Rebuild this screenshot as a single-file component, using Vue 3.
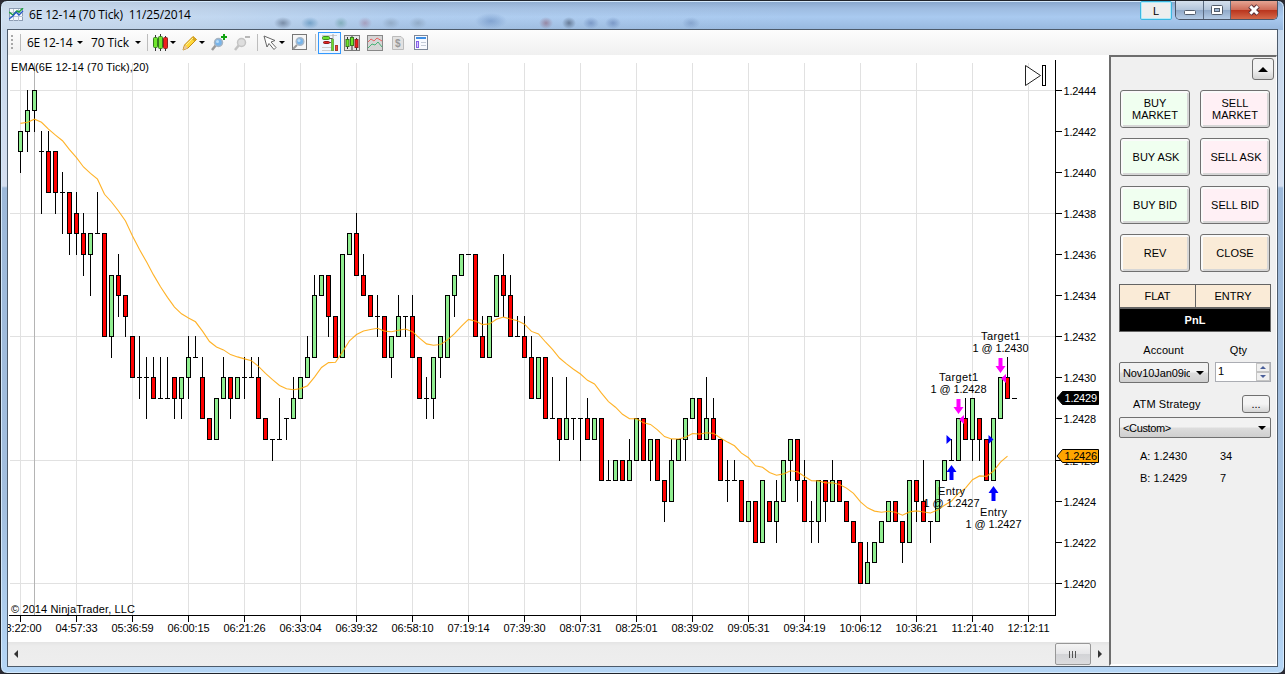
<template>
  <div class="desktop">
    <div class="window">
      <!-- title bar -->
      <header class="titlebar">
        <svg class="app-icon" width="15" height="14" viewBox="0 0 15 14">
          <rect x="0.5" y="0.5" width="13" height="12" fill="#f4f8fc" stroke="#8d9db3" />
          <path d="M4.5 1v12M9.5 1v12M1 4.5h13M1 8.5h13" stroke="#b9c4d4" />
          <path d="M0 4L4 7L8 3L10 4L14 0" fill="none" stroke="#1ea33c" stroke-width="1.5" />
          <path d="M0 11L4 8L7 4L10 7L14 3" fill="none" stroke="#2457c5" stroke-width="1.3" />
        </svg>
        <span class="title">6E 12-14 (70 Tick)&nbsp; 11/25/2014</span>
        <button class="link-btn">L</button>
        <div class="window-btns">
          <button class="win-btn minimize">
            <svg width="28" height="18" viewBox="0 0 28 18"><rect x="8.5" y="9.5" width="11" height="4" rx="1" fill="#fff" stroke="#535d6b" /></svg>
          </button>
          <button class="win-btn maximize">
            <svg width="26" height="18" viewBox="0 0 26 18">
              <rect x="7.5" y="4.500" width="11" height="9" rx="1" fill="#fff" stroke="#535d6b" />
              <rect x="10.500" y="7.500" width="5" height="3" fill="#9eb6d3" stroke="#535d6b" />
            </svg>
          </button>
          <button class="win-btn close">
            <svg width="46" height="18" viewBox="0 0 46 18">
              <path d="M19 5L27 13M27 5L19 13" stroke="#5a3038" stroke-width="5" />
              <path d="M19.300 5.300L26.700 12.700M26.700 5.300L19.300 12.700" stroke="#fff" stroke-width="3" />
            </svg>
          </button>
        </div>
      </header>

      <div class="client">
        <!-- toolbar -->
        <div class="toolbar">
          <svg class="grip" width="4" height="16" viewBox="0 0 4 16">
            <path d="M1 0v16" stroke="#a8a8a8" stroke-width="2" stroke-dasharray="2 2" />
          </svg>
          <span class="sep first"></span>
          <span class="tool-text instrument">6E 12-14</span><i class="caret"></i>
          <span class="tool-text period">70 Tick</span><i class="caret"></i>
          <span class="sep second"></span>
          <svg class="icon" width="16" height="18" viewBox="0 0 16 18">
            <path d="M2.500 1v16M7.500 0v17M12.500 2v15" stroke="#333" />
            <rect x="0.500" y="3.500" width="4" height="10" rx="1" fill="#6fe62c" stroke="#387b1e" />
            <rect x="5.500" y="2.500" width="4" height="12" rx="1" fill="#6fe62c" stroke="#387b1e" />
            <rect x="10.500" y="3.500" width="4" height="11" rx="1" fill="#f0201d" stroke="#8d2323" />
          </svg><i class="caret near"></i>
          <svg class="icon pencil" width="16" height="16" viewBox="0 0 16 16">
            <path d="M1 15L2.500 10L11 1.500L14.500 4.500L6 13Z" fill="#ffd83a" stroke="#c48a13" />
            <path d="M3 10L6 13L1 15Z" fill="#eac69a" />
            <path d="M11 1.500L14.500 4.500L12.500 6.500L9.500 3.500Z" fill="#d8a71e" />
            <path d="M4 10L11 3" stroke="#fff29a" />
          </svg><i class="caret near"></i>
          <svg class="icon" width="17" height="17" viewBox="0 0 17 17">
            <path d="M1 16L5 11" stroke="#9a9a9a" stroke-width="2.500" />
            <circle cx="7.500" cy="8.500" r="4" fill="#79b5ea" stroke="#a8b5c2" stroke-width="1.500" />
            <circle cx="6.500" cy="7.500" r="1.500" fill="#b9dcf8" />
            <path d="M13 0v6M10 3h6" stroke="#12a312" stroke-width="2" />
          </svg>
          <svg class="icon zoom-out" width="17" height="17" viewBox="0 0 17 17">
            <path d="M1 16L5 11" stroke="#c2c2c2" stroke-width="2.500" />
            <circle cx="7.500" cy="8.500" r="4" fill="#dedede" stroke="#c4c4c4" stroke-width="1.500" />
            <path d="M11 3h5" stroke="#b8b8b8" stroke-width="2" />
          </svg>
          <span class="sep third"></span>
          <svg class="icon" width="15" height="16" viewBox="0 0 15 16">
            <path d="M1 1L12 5.500L8 7L13 12.500L11 14.500L6 8.500L4 12Z" fill="#fff" stroke="#666" />
          </svg><i class="caret near"></i>
          <svg class="icon search" width="15" height="17" viewBox="0 0 15 17">
            <rect x="0.500" y="0.500" width="14" height="15" fill="#f6f6f6" stroke="#777" />
            <path d="M1 15L5 11" stroke="#999" stroke-width="2" />
            <circle cx="8" cy="7.500" r="3.800" fill="#79b5ea" stroke="#a9b8c8" stroke-width="1.500" />
            <circle cx="7" cy="6.500" r="1.500" fill="#b9dcf8" />
          </svg>
          <span class="sep last"></span>
          <span class="active-tool">
            <svg width="18" height="18" viewBox="0 0 18 18">
              <path d="M1 1.500h15M1 16.500h9M1 13.500h9" stroke="#ccc" />
              <path d="M8 8.500h4M8 4.500h4" stroke="#555" />
              <rect x="1.500" y="2.500" width="7" height="3" rx="1" fill="#68df2d" stroke="#3f8c20" />
              <rect x="2.500" y="7.500" width="6" height="2" rx="1" fill="#e32222" stroke="#8e1b1b" />
              <path d="M12 0v17" stroke="#aaa" />
              <rect x="10.500" y="5.500" width="2" height="11" fill="#68df2d" stroke="#6fae50" />
              <rect x="14.500" y="11.500" width="2" height="5" fill="#f24b3d" stroke="#a73a30" />
            </svg>
          </span>
          <svg class="icon" width="16" height="16" viewBox="0 0 16 16">
            <rect x="0.500" y="0.500" width="15" height="15" fill="#e6e6e6" stroke="#777" />
            <path d="M3.500 2v12M8 1v14M12.500 3v12" stroke="#333" />
            <rect x="2" y="4.500" width="3" height="7" fill="#6fe62c" stroke="#387b1e" />
            <rect x="6.500" y="2.500" width="3" height="8" fill="#6fe62c" stroke="#387b1e" />
            <rect x="11" y="4.500" width="3" height="8" fill="#f0201d" stroke="#8d2323" />
          </svg>
          <svg class="icon profit" width="16" height="16" viewBox="0 0 16 16">
            <rect x="0.500" y="0.500" width="15" height="15" fill="#d6d6d6" stroke="#888" />
            <path d="M1 7L4 4L7 6L10 3L15 6" fill="none" stroke="#e76565" />
            <path d="M1 13L5 9L8 10L11 7L15 12" fill="none" stroke="#48b375" />
          </svg>
          <svg class="icon money" width="12" height="14" viewBox="0 0 12 14">
            <path d="M0.500 0.500H9L11.500 3V13.500H0.500Z" fill="#e2e2e2" stroke="#bbb" />
            <text x="3" y="11" class="dollar">$</text>
          </svg>
          <svg class="icon layout" width="14" height="15" viewBox="0 0 14 15">
            <rect x="0.500" y="0.500" width="13" height="14" fill="#f8faff" stroke="#7d8798" />
            <path d="M2 3h10" stroke="#3c8ee5" stroke-width="2" />
            <rect x="2.500" y="6.500" width="2" height="6" fill="#dcc9ff" stroke="#8560e8" />
            <path d="M7 7.500h5M7 10.500h5" stroke="#c4cbd8" />
          </svg>
        </div>

        <div class="body">
          <!-- chart -->
          <main class="chart-pane">
            <svg class="chart" width="1101" height="587" viewBox="8 55 1101 587">
              <g shape-rendering="crispEdges">
                <rect v-for="p in gridPrices" :key="'h' + p" x="10" :y="py(p)" width="1045" height="1" fill="#e1e1e1" />
                <rect v-for="t in times" :key="'v' + t.x" :x="t.x" y="63" width="1" height="552" fill="#e1e1e1" />
                <rect x="34" y="63" width="1" height="552" fill="#b4b4b4" />
                <g v-for="c in candles" :key="c.x">
                  <rect :x="c.x" :y="c.high" width="1" :height="c.low - c.high + 1" fill="#000" />
                  <rect :x="c.x - 2" :y="c.top" width="5" :height="c.bottom - c.top + 1" fill="#000" />
                  <rect
                    v-if="c.bottom > c.top"
                    :x="c.x - 1"
                    :y="c.top + 1"
                    width="3"
                    :height="c.bottom - c.top - 1"
                    :fill="c.up ? '#90ee90' : '#ff0000'"
                  />
                </g>
              </g>
              <polyline :points="emaPoints" fill="none" stroke="#ffa500" stroke-width="1.100" stroke-opacity="0.85" />

              <!-- executions -->
              <g v-for="e in executions" :key="e.x + e.name">
                <path :d="e.arrow" :fill="e.color" />
                <path :d="e.mark" :fill="e.color" />
                <text :x="e.tx" :y="e.ty" text-anchor="middle" :textLength="e.w">{{ e.name }}</text>
                <text :x="e.tx" :y="e.ty + 12" text-anchor="middle" textLength="56">{{ e.price }}</text>
              </g>

              <!-- axes -->
              <g shape-rendering="crispEdges">
                <rect x="1055" y="60" width="1" height="556" />
                <rect x="9" y="615" width="1047" height="1" />
                <rect v-for="p in axisPrices" :key="'t' + p" x="1056" :y="py(p)" width="6" height="1" />
                <rect v-for="t in times" :key="'x' + t.x" :x="t.x" y="616" width="1" height="6" />
              </g>
              <text v-for="p in axisPrices" :key="'l' + p" x="1063.500" :y="py(p) + 5" textLength="32.500">1.24{{ p }}</text>
              <text v-for="t in times" :key="t.label" :x="t.x + 0.5" y="632" text-anchor="middle" textLength="42">{{ t.label }}</text>
              <path d="M1057 398L1062.500 391.500H1098.500V404.500H1062.500Z" fill="#000" stroke="#000" />
              <text x="1064.500" y="402" textLength="32.500" class="white">1.2429</text>
              <path d="M1057 456L1062.500 449.500H1098.500V462.500H1062.500Z" fill="#ffa500" stroke="#000" />
              <text x="1064.500" y="460" textLength="32.500">1.2426</text>

              <text x="11" y="71" textLength="138">EMA(6E 12-14 (70 Tick),20)</text>
              <text x="11" y="613" textLength="124">© 2014 NinjaTrader, LLC</text>
              <path d="M1025.500 65.500V85.500L1040.500 75.500Z" fill="#fff" stroke="#222" />
              <rect x="1042.500" y="65.500" width="3" height="20" fill="#fff" stroke="#000" />
            </svg>
            <div class="scrollbar">
              <i class="arrow left"></i>
              <span class="thumb"><i></i><i></i><i></i></span>
              <i class="arrow right"></i>
            </div>
          </main>

          <!-- chart trader -->
          <aside class="trader">
            <button class="collapse"><i class="up"></i></button>
            <div class="order-grid">
              <button v-for="b in orderButtons" :key="b.text" class="order-btn" :class="b.kind">
                <span>{{ b.text }}</span>
              </button>
            </div>
            <div class="position">
              <span>FLAT</span>
              <span>ENTRY</span>
            </div>
            <div class="pnl">PnL</div>
            <div class="labels"><span class="account-label">Account</span><span class="qty-label">Qty</span></div>
            <div class="row">
              <div class="select account"><span>Nov10Jan09ic</span><i class="down"></i></div>
              <div class="qty">
                <span>1</span>
                <div class="spinner"><b><i class="spin-up"></i></b><b><i class="spin-down"></i></b></div>
              </div>
            </div>
            <div class="row atm">
              <span class="atm-label">ATM Strategy</span>
              <button class="more">...</button>
            </div>
            <div class="select strategy"><span>&lt;Custom&gt;</span><i class="down"></i></div>
            <div class="quote ask"><span>A: 1.2430</span><span>34</span></div>
            <div class="quote"><span>B: 1.2429</span><span>7</span></div>
          </aside>
        </div>
      </div>
    </div>
  </div>
</template>

<script setup>
// open, high, low, close - in ticks above 1.2400
const bars = [
  [41, 42, 40, 42], [42, 44, 41, 43], [43, 44, 42, 44], [41, 42, 38, 41], [41, 42, 39, 39],
  [41, 41, 38, 39], [39, 40, 37, 39], [39, 39, 36, 37], [38, 39, 36, 37], [37, 38, 35, 36],
  [36, 37, 34, 37], [37, 39, 37, 37], [37, 37, 32, 32], [32, 35, 31, 35], [35, 36, 33, 34],
  [34, 34, 32, 33], [32, 32, 30, 30], [30, 32, 29, 30], [30, 31, 28, 30], [30, 31, 29, 29],
  [29, 31, 29, 29], [29, 31, 29, 29], [30, 30, 28, 29], [29, 30, 28, 30], [30, 32, 29, 31],
  [31, 32, 31, 31], [30, 31, 28, 28], [28, 28, 27, 27], [27, 29, 27, 29], [29, 31, 29, 30],
  [30, 30, 28, 29], [29, 30, 29, 30], [30, 31, 29, 30], [30, 31, 30, 30], [30, 31, 28, 28],
  [28, 28, 27, 27], [27, 27, 26, 27], [27, 29, 27, 27], [28, 28, 27, 28], [28, 30, 28, 29],
  [29, 30, 29, 30], [30, 32, 30, 31], [31, 35, 31, 34], [34, 35, 34, 35], [35, 35, 32, 33],
  [33, 33, 31, 31], [31, 36, 31, 36], [36, 37, 36, 37], [37, 38, 35, 35], [35, 36, 34, 34],
  [34, 34, 33, 33], [33, 34, 32, 33], [33, 33, 31, 31], [31, 32, 30, 32], [32, 34, 32, 33],
  [33, 33, 32, 33], [33, 34, 31, 31], [31, 31, 29, 29], [29, 30, 28, 29], [29, 31, 28, 31],
  [31, 32, 30, 32], [31, 34, 31, 34], [34, 35, 33, 35], [35, 36, 35, 36], [36, 36, 36, 36],
  [36, 36, 32, 32], [32, 33, 31, 31], [31, 33, 31, 33], [33, 35, 33, 35], [35, 36, 33, 34],
  [34, 35, 32, 32], [32, 33, 32, 32], [32, 33, 31, 31], [31, 32, 29, 29], [29, 31, 29, 31],
  [31, 31, 28, 28], [28, 30, 28, 28], [28, 28, 26, 27], [27, 30, 27, 28], [28, 28, 27, 28],
  [28, 28, 26, 28], [28, 29, 27, 27], [27, 28, 27, 28], [28, 28, 25, 25], [25, 26, 25, 25],
  [25, 26, 25, 26], [26, 26, 25, 25], [25, 27, 25, 26], [26, 28, 26, 28], [28, 28, 26, 26],
  [26, 27, 25, 27], [27, 27, 25, 25], [25, 25, 23, 24], [24, 27, 24, 26], [26, 27, 26, 27],
  [27, 28, 26, 28], [28, 29, 28, 29], [29, 29, 27, 27], [27, 30, 27, 28], [28, 29, 27, 27],
  [27, 27, 25, 25], [25, 26, 24, 25], [25, 26, 25, 25], [25, 25, 23, 23], [23, 24, 23, 24],
  [24, 24, 22, 22], [22, 25, 22, 25], [24, 24, 23, 23], [23, 25, 22, 24], [24, 26, 24, 26],
  [26, 27, 25, 27], [27, 27, 24, 25], [25, 26, 23, 23], [23, 24, 22, 23], [23, 25, 22, 25],
  [25, 25, 23, 24], [24, 26, 24, 25], [25, 25, 24, 24], [24, 24, 23, 23], [23, 23, 22, 22],
  [22, 22, 20, 20], [20, 22, 20, 21], [21, 22, 21, 22], [22, 23, 22, 23], [23, 24, 23, 24],
  [24, 24, 23, 23], [23, 23, 21, 22], [22, 25, 22, 25], [25, 25, 23, 24], [24, 26, 23, 23],
  [23, 23, 22, 23], [23, 25, 23, 25], [25, 26, 25, 26], [26, 27, 26, 26], [26, 28, 26, 28],
  [28, 29, 27, 27], [27, 29, 26, 29], [28, 28, 26, 27], [27, 27, 25, 25], [25, 28, 25, 28],
  [28, 30, 28, 30], [30, 31, 29, 29], [29, 29, 29, 29]
]

const scale = p => 90 + (44 - p) * 20.56
const py = p => Math.floor(scale(p))

const candles = bars.map(([open, high, low, close], i) => ({
  x: 20 + i * 7,
  high: py(high),
  low: py(low),
  top: py(Math.max(open, close)),
  bottom: py(Math.min(open, close)),
  up: close > open
}))

// 20 period EMA of the closes, the open bar is left out
let ema = 42.4
const emaPoints = bars.slice(0, -1).map((bar, i) => {
  if (i > 0) ema += (bar[3] - ema) * 2 / 21
  return `${20.5 + i * 7},${(scale(ema) + 0.5).toFixed(1)}`
}).join(' ')

const gridPrices = [44, 38, 32, 26, 20]
const axisPrices = [44, 42, 40, 38, 36, 34, 32, 30, 28, 26, 24, 22, 20]

const times = [
  '03:22:00', '04:57:33', '05:36:59', '06:00:15', '06:21:26', '06:33:04', '06:39:32',
  '06:58:10', '07:19:14', '07:39:30', '08:07:31', '08:25:01', '08:39:02', '09:05:31',
  '09:34:19', '10:06:12', '10:36:21', '11:21:40', '12:12:11'
].map((label, i) => ({ label, x: 20 + i * 56 }))

const downArrow = (x, y) => `M${x - 2} ${y}h4v8h3l-5 7l-5 -7h3z`
const upArrow = (x, y) => `M${x - 2} ${y}h4v-8h3l-5 -7l-5 7h3z`

const executions = [
  { name: 'Entry', price: '1 @ 1.2427', x: 951, tx: 951.5, ty: 495, w: 27, color: '#0000ff', arrow: upArrow(951.5, 480), mark: 'M946.500 435v9l5 -4.500z' },
  { name: 'Target1', price: '1 @ 1.2428', x: 958, tx: 958.5, ty: 381, w: 39, color: '#ff00ff', arrow: downArrow(958.5, 399), mark: 'M964 415v9l-5 -4.500z' },
  { name: 'Entry', price: '1 @ 1.2427', x: 993, tx: 993.5, ty: 516, w: 27, color: '#0000ff', arrow: upArrow(993.5, 501), mark: 'M988.500 435v9l5 -4.500z' },
  { name: 'Target1', price: '1 @ 1.2430', x: 1000, tx: 1000.5, ty: 340, w: 39, color: '#ff00ff', arrow: downArrow(1000.5, 358), mark: 'M1006 374v9l-5 -4.500z' }
]

const orderButtons = [
  { text: 'BUY MARKET', kind: 'buy' },
  { text: 'SELL MARKET', kind: 'sell' },
  { text: 'BUY ASK', kind: 'buy single' },
  { text: 'SELL ASK', kind: 'sell single' },
  { text: 'BUY BID', kind: 'buy' },
  { text: 'SELL BID', kind: 'sell' },
  { text: 'REV', kind: 'neutral' },
  { text: 'CLOSE', kind: 'neutral' }
]
</script>

<style>
body {
  margin: 0;
  overflow: hidden;
}
</style>

<style scoped>
* {
  box-sizing: border-box;
}

.desktop {
  width: 1285px;
  height: 674px;
  background: #2b2a33;
  font-family: "Liberation Sans", Arial, sans-serif;
  font-size: 11px;
  color: #000;
}

button {
  padding: 0;
  font: inherit;
  color: inherit;
}

/* glass frame, other windows shimmer through the title bar */
.window {
  width: 1285px;
  height: 674px;
  display: flex;
  flex-direction: column;
  border: 1px solid #20242b;
  border-radius: 7px;
  box-shadow: inset 0 0 0 1px #d5e9fb;
  background:
    radial-gradient(ellipse 9px 6px at 282px 22px, rgba(60, 75, 100, 0.5), transparent),
    radial-gradient(ellipse 9px 6px at 309px 22px, rgba(40, 110, 160, 0.45), transparent),
    radial-gradient(ellipse 7px 6px at 340px 22px, rgba(60, 130, 120, 0.4), transparent),
    radial-gradient(ellipse 7px 6px at 364px 22px, rgba(150, 80, 110, 0.35), transparent),
    radial-gradient(ellipse 9px 6px at 390px 22px, rgba(110, 130, 150, 0.4), transparent),
    radial-gradient(ellipse 9px 6px at 417px 22px, rgba(110, 130, 150, 0.4), transparent),
    radial-gradient(ellipse 16px 8px at 490px 20px, rgba(70, 110, 170, 0.4), transparent),
    radial-gradient(ellipse 7px 6px at 545px 22px, rgba(130, 60, 80, 0.45), transparent),
    radial-gradient(ellipse 7px 6px at 568px 22px, rgba(40, 50, 70, 0.5), transparent),
    radial-gradient(ellipse 8px 6px at 590px 22px, rgba(60, 90, 150, 0.4), transparent),
    radial-gradient(ellipse 8px 6px at 612px 22px, rgba(60, 90, 150, 0.4), transparent),
    radial-gradient(ellipse 9px 6px at 690px 22px, rgba(80, 110, 160, 0.35), transparent),
    linear-gradient(90deg, rgba(225, 233, 241, 0.7) 0, rgba(225, 233, 241, 0.45) 210px, rgba(225, 233, 241, 0.15) 400px, transparent 800px) 0 0 / 100% 29px no-repeat,
    linear-gradient(#86a5cb 0, #9dbbe0 7px, #a9caf0 16px, #97b7dd 29px) 0 0 / 100% 29px no-repeat,
    linear-gradient(#c5d8ec 0, #d5dff0 185px, #9db9da 187px, #a3bfdf 500px, #b5d6f6 100%);
}

.titlebar {
  height: 28px;
  flex: none;
  display: flex;
  align-items: flex-start;
  padding-left: 8px;
}

.app-icon {
  margin-top: 7px;
}

.title {
  flex: 1;
  margin: 5px 0 0 5px;
  font: 12px/17px "Open Sans", sans-serif;
  letter-spacing: -0.16px;
}

.link-btn {
  width: 32px;
  height: 19px;
  margin-right: 3px;
  border: 1px solid #3db7e0;
  border-radius: 2px;
  background: #eeeeee;
  box-shadow: inset 0 0 0 1px #b3ecfb;
}

.window-btns {
  display: flex;
  height: 19px;
  margin-right: 6px;
  border: 1px solid #4a5668;
  border-top: none;
  border-radius: 0 0 5px 5px;
  overflow: hidden;
}

.win-btn {
  height: 18px;
  border: 0;
  border-right: 1px solid #5a6a80;
  background: linear-gradient(#d5e0ed 0, #b3c5db 48%, #8fa8c7 50%, #b4cbe5 100%);
}

.win-btn svg {
  display: block;
}

.minimize {
  width: 28px;
}

.maximize {
  width: 27px;
}

.close {
  width: 46px;
  border-right: 0;
  background: linear-gradient(#e5a493 0, #cf6c58 48%, #b8331c 50%, #d5694a 100%);
}

.client {
  flex: 1;
  min-height: 0;
  margin: 0 6px 6px;
  display: flex;
  flex-direction: column;
  border: 1px solid #4d5b6b;
  background: #f0f0f0;
}

.toolbar {
  height: 25px;
  flex: none;
  display: flex;
  align-items: center;
  padding-left: 3px;
  background: linear-gradient(#fdfdfd, #f0f0f0);
}

.sep {
  width: 1px;
  height: 17px;
  background: #bdbdbd;
}

.sep.first {
  margin: 0 6px 0 5px;
}

.sep.second {
  margin: 0 5px 0 6px;
}

.sep.third {
  margin: 0 5px 0 6px;
}

.sep.last {
  margin: 0 2px 0 8px;
}

.tool-text {
  font: 12px/16px "Open Sans", sans-serif;
  letter-spacing: -0.35px;
  white-space: nowrap;
}

.instrument {
  width: 50px;
}

.period {
  width: 44px;
  margin-left: 8px;
  letter-spacing: -0.1px;
}

.caret {
  border: 3px solid transparent;
  border-top-color: #000;
  border-bottom: 0;
}

.caret.near {
  margin-left: 1px;
  margin-right: 6px;
}

.icon {
  flex: none;
}

.zoom-out {
  margin-left: 6px;
}

.search {
  margin-left: 1px;
}

.active-tool {
  width: 23px;
  height: 22px;
  display: grid;
  place-items: center;
  margin-right: 3px;
  border: 1px solid #3399ff;
  background: #eef6ff;
}

.profit {
  margin-left: 7px;
}

.money {
  margin-left: 9px;
}

.layout {
  margin-left: 10px;
}

.dollar {
  font: bold 10px "Liberation Sans", sans-serif;
  fill: #999;
}

.body {
  flex: 1;
  min-height: 0;
  display: flex;
}

.chart-pane {
  width: 1101px;
  flex: none;
  display: flex;
  flex-direction: column;
  background: #fff;
}

.chart {
  display: block;
  flex: none;
}

.chart text {
  font: 11px "Liberation Sans", Arial, sans-serif;
}

.chart text.white {
  fill: #fff;
}

.scrollbar {
  flex: 1;
  display: flex;
  align-items: center;
  background: linear-gradient(#e4e4e4, #ececec 4px, #eeeeee);
}

.arrow {
  border: 4px solid transparent;
}

.arrow.left {
  margin-left: 2px;
  margin-right: auto;
  border-right-color: #333;
}

.arrow.right {
  margin: 0 3px 0 7px;
  border-left-color: #333;
}

.thumb {
  width: 36px;
  height: 22px;
  display: flex;
  justify-content: center;
  align-items: center;
  gap: 1px;
  border: 1px solid #979797;
  border-radius: 2px;
  background: linear-gradient(#f4f4f4 0, #e6e6e8 48%, #d2d3d6 50%, #dcdcde 100%);
}

.thumb i {
  width: 2px;
  height: 7px;
  border-left: 1px solid #555;
}

.trader {
  flex: 1;
  display: flex;
  flex-direction: column;
  padding: 1px 0 0 8px;
  border-top: 2px solid #6d6d6d;
  border-left: 2px solid #6d6d6d;
  border-right: 1px solid #fff;
  border-bottom: 2px solid #fff;
  background: #f0f0f0;
}

.collapse {
  width: 22px;
  height: 22px;
  flex: none;
  align-self: flex-end;
  display: grid;
  place-items: center;
  margin-right: 2px;
  border: 1px solid #707070;
  border-radius: 3px;
  background: linear-gradient(#f2f2f2 50%, #d4d4d4);
}

.up {
  border: 5px solid transparent;
  border-bottom-color: #000;
  border-top: 0;
}

.order-grid {
  display: grid;
  grid-template-columns: 70px 70px;
  gap: 10px;
  margin: 10px 0 0 1px;
}

.order-btn {
  height: 38px;
  display: grid;
  place-items: center;
  border: 1px solid #707070;
  border-radius: 3px;
  box-shadow: inset 1px 1px 0 1px #fafafa, inset -1px -1px 0 1px #d6d6d6;
  line-height: 12px;
}

.order-btn span {
  width: 50px;
}

.order-btn.single span {
  width: auto;
  padding-left: 2px;
}

.buy {
  background: #f0fff0;
}

.sell {
  background: #fff0f5;
}

.neutral {
  background: #faebd7;
}

.position {
  height: 24px;
  width: 152px;
  display: grid;
  grid-template-columns: 1fr 1fr;
  flex: none;
  margin-top: 12px;
  border: 1px solid #646464;
  background: #faebd7;
  text-align: center;
  line-height: 22px;
}

.position span + span {
  border-left: 1px solid #646464;
}

.pnl {
  width: 152px;
  height: 24px;
  flex: none;
  border: 1px solid #646464;
  background: #000;
  color: #fff;
  font-weight: bold;
  line-height: 23px;
  text-align: center;
}

.labels {
  display: flex;
  margin-top: 12px;
  height: 18px;
  line-height: 13px;
  letter-spacing: 0.1px;
}

.account-label {
  width: 89px;
  text-align: center;
}

.qty-label {
  width: 61px;
  text-align: center;
}

.row {
  display: flex;
  flex: none;
}

.select {
  height: 21px;
  display: flex;
  align-items: center;
  justify-content: space-between;
  padding: 0 4px 0 3px;
  border: 1px solid #707070;
  border-radius: 2px;
  background: linear-gradient(#f2f2f2 48%, #dddddd 52%, #cfcfcf);
}

.account {
  width: 90px;
}

.account span {
  width: 67px;
  overflow: hidden;
  white-space: nowrap;
  letter-spacing: -0.1px;
}

.strategy span {
  letter-spacing: -0.35px;
}

.down {
  border: 4px solid transparent;
  border-top-color: #000;
  border-bottom: 0;
}

.qty {
  width: 56px;
  height: 20px;
  display: flex;
  justify-content: space-between;
  margin-left: 6px;
  padding-left: 2px;
  border: 1px solid #abadb3;
  background: #fff;
  line-height: 17px;
}

.spinner {
  width: 14px;
  display: flex;
  flex-direction: column;
}

.spinner b {
  flex: 1;
  display: grid;
  place-items: center;
  border: 1px solid #c4c4c4;
  background: #f0f0f0;
}

.spin-up {
  border: 3px solid transparent;
  border-bottom: 3px solid #4a5f9a;
  border-top: 0;
}

.spin-down {
  border: 3px solid transparent;
  border-top: 3px solid #4a5f9a;
  border-bottom: 0;
}

.atm {
  margin-top: 12px;
  padding-left: 14px;
}

.atm-label {
  width: 109px;
  line-height: 19px;
  letter-spacing: 0.1px;
}

.more {
  width: 28px;
  height: 18px;
  border: 1px solid #707070;
  border-radius: 3px;
  background: linear-gradient(#f4f4f4 50%, #d5d5d5);
  line-height: 14px;
}

.strategy {
  width: 152px;
  flex: none;
  margin-top: 3px;
}

.quote {
  display: flex;
  height: 22px;
  padding-left: 21px;
  line-height: 13px;
}

.quote.ask {
  margin-top: 12px;
}

.quote span:first-child {
  width: 80px;
}
</style>
